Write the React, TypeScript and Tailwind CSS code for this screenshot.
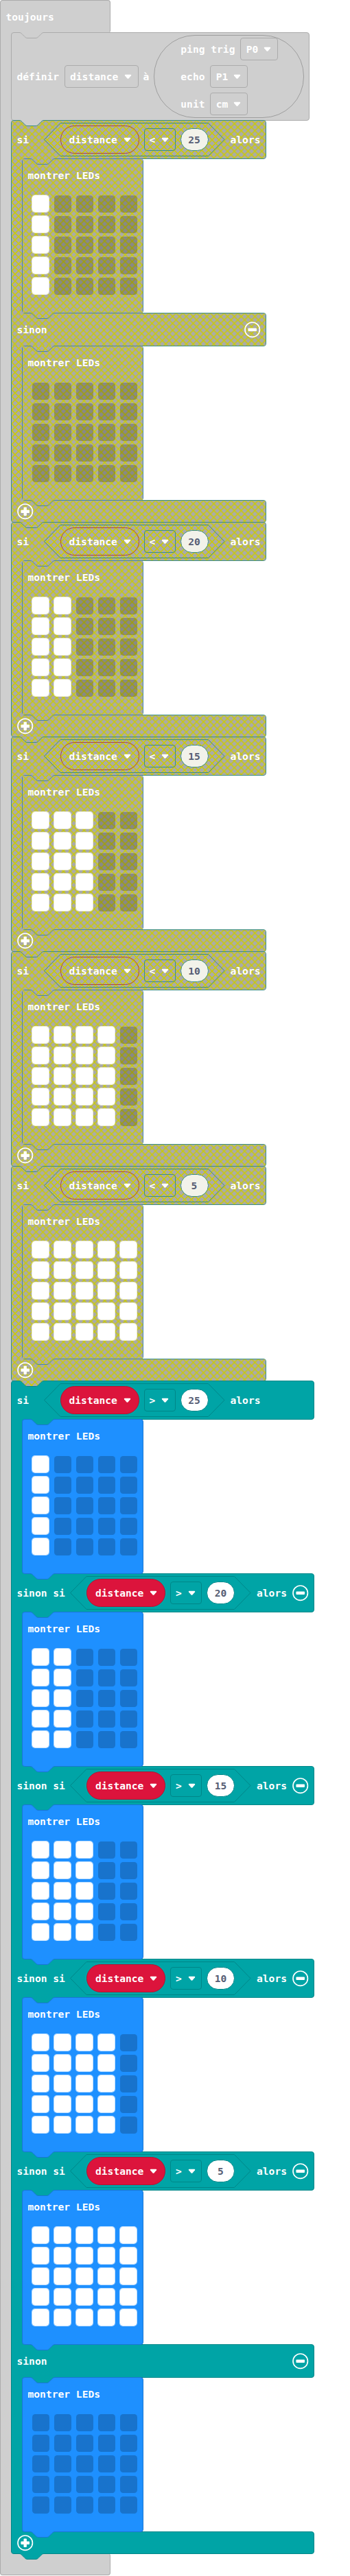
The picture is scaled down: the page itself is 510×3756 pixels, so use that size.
import React from "react";

type Tone = { fill: string; line: string; svgLine: string };

const GRAY: Tone = { fill: "bg-[#cfcfcf]", line: "border-[#ababab]", svgLine: "#ababab" };
const TEAL: Tone = { fill: "bg-[#00a4a6]", line: "border-[#008688]", svgLine: "#008688" };
const BLUE: Tone = { fill: "bg-[#1e90ff]", line: "border-[#1976d2]", svgLine: "#1976d2" };
const OFF_TEAL: Tone = { fill: "bg-[#aaaaaa]", line: "border-[#3d8f84]", svgLine: "#3d8f84" };
const OFF_BLUE: Tone = { fill: "bg-[#aaaaaa]", line: "border-[#4a86a8]", svgLine: "#4a86a8" };

const HEX = "M24 .5H239.500L263 24.500L239.500 48.500H24L.5 24.500Z";

function Hatch({ x = 0, y = 0 }: { x?: number; y?: number }) {
  return (
    <svg className="pointer-events-none absolute inset-0 size-full" aria-hidden="true">
      <g transform={`translate(${-x} ${-y})`}>
        <rect x={x} y={y} width="520" height="420" fill="url(#hatch)" />
      </g>
    </svg>
  );
}

function Notch({ fill, line, at, x = 0, y = 0 }: { fill: string; line: string; at: string; x?: number; y?: number }) {
  const curve = "c2 0 3 1 4 2l4 4c1 1 2 2 4 2h12c2 0 3-1 4-2l4-4c1-1 2-2 4-2";
  return (
    <svg className={`pointer-events-none absolute z-30 ${at}`} width="36" height="10" aria-hidden="true">
      <g transform={`translate(${-x} ${-y})`}>
        <path d={`M${x} ${y}v.5${curve}v-.5z`} fill={fill === "hatch" ? "#aaaaaa" : fill} />
        {fill === "hatch" && <path d={`M${x} ${y}v.5${curve}v-.5z`} fill="url(#hatch)" />}
        <path d={`M${x} ${y + 0.5}${curve}`} fill="none" stroke={line} />
      </g>
    </svg>
  );
}

function Caret() {
  return (
    <svg width="11" height="8" viewBox="0 0 11 8" className="shrink-0" aria-hidden="true">
      <path d="M1.600.8H9.400Q10.800 1 10 2.200L6.600 6.300Q5.500 7.300 4.400 6.300L1 2.200Q.2 1 1.600.8Z" fill="#fff" />
    </svg>
  );
}

function Round({ plus }: { plus?: boolean }) {
  return (
    <svg width="24" height="24" viewBox="0 0 24 24" className="block shrink-0" aria-hidden="true">
      <circle cx="11.700" cy="11.700" r="10.700" fill="none" stroke="#fff" strokeWidth="1.700" />
      <rect x="5.400" y="9.500" width="12.600" height="4.400" rx="1" fill="#fff" />
      {plus && <rect x="9.500" y="5.400" width="4.400" height="12.600" rx="1" fill="#fff" />}
    </svg>
  );
}

function Leds({ lit, off }: { lit: number; off?: boolean }) {
  const t = off ? OFF_BLUE : BLUE;
  return (
    <div className={`relative z-20 h-[226px] w-[177px] shrink-0 rounded-[4px] border ${t.fill} ${t.line}`}>
      {off && <Hatch x={0.5} y={0.5} />}
      <Notch fill={off ? "hatch" : "#00a4a6"} line={t.svgLine} at="-top-px left-[11px]" x={28} y={6} />
      <Notch fill={off ? "hatch" : "#1e90ff"} line={t.svgLine} at="top-[224px] left-[11px]" x={12} y={5} />
      <div className="relative pt-[14px] pl-[7.500px] leading-5">montrer LEDs</div>
      <div className="relative mt-[18px] ml-[13px] grid w-[156px] grid-cols-[repeat(5,26px)] gap-x-[6px] gap-y-[4px]">
        {Array.from({ length: 25 }, (_, i) =>
          i % 5 < lit ? (
            <div key={i} className="size-[26px] rounded-[5px] border border-white/70 bg-white bg-clip-padding" />
          ) : (
            <div key={i} className="size-[26px] p-[.5px]">
              <div className={`size-[25px] rounded-[4.500px] ${off ? "bg-black/20" : "bg-[#1873cc]"}`} />
            </div>
          ),
        )}
      </div>
    </div>
  );
}

function Body({ lit, off }: { lit: number; off?: boolean }) {
  const t = off ? OFF_TEAL : TEAL;
  return (
    <div className="relative z-10 -my-px flex h-[226px]">
      <div className={`relative -mr-1 w-[20px] overflow-hidden border-l ${t.fill} ${t.line}`}>{off && <Hatch x={0} y={6} />}</div>
      <Leds lit={lit} off={off} />
    </div>
  );
}

function Condition({ op, value, off }: { op: string; value: number; off?: boolean }) {
  const t = off ? OFF_TEAL : TEAL;
  return (
    <div className="relative flex h-[49px] w-[264px] shrink-0 items-center pl-6">
      <svg width="264" height="49" className="absolute inset-0" aria-hidden="true">
        <path d={HEX} fill={off ? "url(#hatch)" : "none"} stroke={t.svgLine} />
      </svg>
      <div
        className={`relative flex h-[41px] w-[115px] items-center gap-[9px] overflow-hidden rounded-full border pl-[12px] ${
          off ? "border-[#b14a3c]" : "border-[#b8122f] bg-[#dc143c]"
        }`}
      >
        distance
        <Caret />
      </div>
      <div className={`relative ml-[7px] flex h-[33px] w-[46px] items-center gap-[9px] rounded-[4px] border pl-[7px] ${t.line}`}>
        {op}
        <Caret />
      </div>
      <div
        className={`relative ml-[7px] flex h-[33px] w-[41px] items-center justify-center rounded-full border text-[#575e75] ${
          off ? "border-[#3d8f84] bg-[#f2f2ea]" : "border-[#008688] bg-white"
        }`}
      >
        {value}
      </div>
    </div>
  );
}

function Bar({
  off,
  kind,
  first,
  children,
}: {
  off?: boolean;
  kind: "head" | "mid" | "foot";
  first?: boolean;
  children: React.ReactNode;
}) {
  const t = off ? OFF_TEAL : TEAL;
  const size = kind === "head" ? "h-[57px]" : kind === "mid" ? "h-[49px]" : "h-[33px]";
  const corner = first ? "rounded-tl-[4px]" : kind === "foot" ? "rounded-bl-[4px]" : "";
  return (
    <div
      className={`relative flex items-center overflow-hidden rounded-r-[4px] border pl-[7.500px] ${size} ${corner} ${
        off ? "w-[372px]" : "w-[442px]"
      } ${t.fill} ${t.line}`}
    >
      {off && <Hatch x={0.5} y={0.5} />}
      {children}
    </div>
  );
}

function If({ off, above, children }: { off?: boolean; above: string; children: React.ReactNode }) {
  return (
    <div className="relative -mb-px flex flex-col">
      <Notch fill={above} line={off ? "#3d8f84" : "#008688"} at="top-0 left-[12px]" x={12} y={3} />
      {children}
    </div>
  );
}

function Head({ op, value, off, chained }: { op: string; value: number; off?: boolean; chained?: boolean }) {
  return (
    <Bar off={off} kind="head" first={!chained}>
      <span className={`relative shrink-0 ${chained ? "w-[77.500px]" : "w-[39px]"}`}>{chained ? "sinon si" : "si"}</span>
      <Condition op={op} value={value} off={off} />
      <span className="relative ml-2">alors</span>
      {chained && (
        <span className="relative ml-2">
          <Round />
        </span>
      )}
    </Bar>
  );
}

function Else({ off }: { off?: boolean }) {
  return (
    <Bar off={off} kind="mid">
      <span className="relative flex-1">sinon</span>
      <span className="relative mr-[7px]">
        <Round />
      </span>
    </Bar>
  );
}

function Foot({ off }: { off?: boolean }) {
  return (
    <Bar off={off} kind="foot">
      <span className="relative">
        <Round plus />
      </span>
    </Bar>
  );
}

function Field({ label, width }: { label: string; width: string }) {
  return (
    <div className={`flex h-[33px] items-center justify-between rounded-[4px] border border-[#ababab] pr-[9px] pl-[7.500px] ${width}`}>
      {label}
      <Caret />
    </div>
  );
}

export default function App() {
  return (
    <div className="h-[3756px] w-[510px] overflow-hidden bg-white font-['DejaVu_Sans_Mono',monospace] text-[14.620px] leading-5 font-bold whitespace-pre text-white">
      <svg className="absolute size-0" aria-hidden="true">
        <defs>
          <pattern id="hatch" patternUnits="userSpaceOnUse" width="10" height="10">
            <rect width="10" height="10" fill="#aaaaaa" />
            <path d="M0 0L10 10M10 0L0 10" stroke="#cccc00" strokeWidth="1.500" />
          </pattern>
        </defs>
      </svg>

      <div className="flex h-[48px] w-[161px] items-center rounded-t-[4px] rounded-br-[4px] border border-b-0 border-[#ababab] bg-[#cfcfcf] pl-[7.500px]">
        toujours
      </div>

      <div className="flex">
        <div className="-mt-px -mr-1 w-[20px] shrink-0 border-l border-[#ababab] bg-[#cfcfcf]" />
        <div className="relative -mt-px flex flex-col">
          <div className="relative -mb-px flex h-[129px] w-[435px] items-center rounded-[4px] border border-[#ababab] bg-[#cfcfcf] pl-[7.500px]">
            <Notch fill="#cfcfcf" line={GRAY.svgLine} at="-top-px left-[11px]" />
            <span className="w-[69px]">définir</span>
            <Field label="distance" width="w-[108px]" />
            <span className="ml-[7px]">à</span>
            <div className="ml-[7px] flex h-[121px] w-[219px] flex-col justify-center gap-[7px] rounded-[60px] border border-[#9e9e9e] pl-[38px]">
              <div className="flex items-center">
                <span className="w-[87px]">ping trig</span>
                <Field label="P0" width="w-[55px]" />
              </div>
              <div className="flex items-center">
                <span className="w-[43px]">echo</span>
                <Field label="P1" width="w-[55px]" />
              </div>
              <div className="flex items-center">
                <span className="w-[43px]">unit</span>
                <Field label="cm" width="w-[55px]" />
              </div>
            </div>
          </div>

          <If off above="#cfcfcf">
            <Head off op="<" value={25} />
            <Body off lit={1} />
            <Else off />
            <Body off lit={0} />
            <Foot off />
          </If>
          {[20, 15, 10, 5].map((value, i) => (
            <If key={value} off above="hatch">
              <Head off op="<" value={value} />
              <Body off lit={i + 2} />
              <Foot off />
            </If>
          ))}
          <If above="hatch">
            <Head op=">" value={25} />
            <Body lit={1} />
            {[20, 15, 10, 5].map((value, i) => (
              <React.Fragment key={value}>
                <Head chained op=">" value={value} />
                <Body lit={i + 2} />
              </React.Fragment>
            ))}
            <Else />
            <Body lit={0} />
            <Foot />
            <Notch fill="#00a4a6" line="#008688" at="-bottom-[9px] left-[12px]" />
          </If>
        </div>
      </div>

      <div className="h-[32px] w-[161px] rounded-tr-[4px] rounded-b-[4px] border border-t-0 border-[#ababab] bg-[#cfcfcf]" />
    </div>
  );
}
